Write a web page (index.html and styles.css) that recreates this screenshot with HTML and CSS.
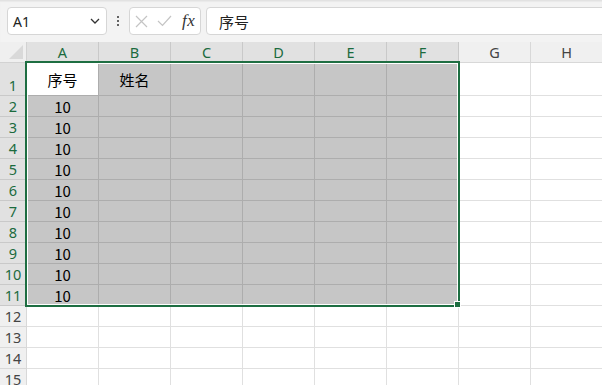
FILE: index.html
```html
<!DOCTYPE html>
<html lang="zh">
<head>
<meta charset="utf-8">
<title>Sheet</title>
<link rel="stylesheet" href="styles.css">
</head>
<body>
<div class="toolbar">
  <div class="namebox"><span class="ref">A1</span>
    <svg class="chev" width="10" height="6" viewBox="0 0 10 6"><path d="M1 1 L5 5 L9 1" fill="none" stroke="#333" stroke-width="1.3"/></svg>
  </div>
  <div class="dots"><span></span><span></span><span></span></div>
  <div class="fxbox">
    <svg class="ico" width="13" height="13" viewBox="0 0 13 13"><path d="M1 1 L12 12 M12 1 L1 12" stroke="#c4c4c4" stroke-width="1.2" fill="none"/></svg>
    <svg class="ico" width="15" height="12" viewBox="0 0 15 12"><path d="M1 6 L5.5 10.5 L14 1" stroke="#c4c4c4" stroke-width="1.2" fill="none"/></svg>
    <span class="fx">fx</span>
  </div>
  <div class="formula">序号</div>
</div>
<div class="sheet">
  <div class="grid">
    <div class="corner"><svg width="14" height="14" viewBox="0 0 14 14"><polygon points="14,0 14,14 0,14" fill="#d9d9d9"/></svg></div>
    <div class="ch on">A</div><div class="ch on">B</div><div class="ch on">C</div><div class="ch on">D</div><div class="ch on">E</div><div class="ch on">F</div><div class="ch">G</div><div class="ch">H</div>

    <div class="rh on">1</div><div class="c act">序号</div><div class="c sel">姓名</div><div class="c sel"></div><div class="c sel"></div><div class="c sel"></div><div class="c sel"></div><div class="c"></div><div class="c"></div>
    <div class="rh on">2</div><div class="c sel">10</div><div class="c sel"></div><div class="c sel"></div><div class="c sel"></div><div class="c sel"></div><div class="c sel"></div><div class="c"></div><div class="c"></div>
    <div class="rh on">3</div><div class="c sel">10</div><div class="c sel"></div><div class="c sel"></div><div class="c sel"></div><div class="c sel"></div><div class="c sel"></div><div class="c"></div><div class="c"></div>
    <div class="rh on">4</div><div class="c sel">10</div><div class="c sel"></div><div class="c sel"></div><div class="c sel"></div><div class="c sel"></div><div class="c sel"></div><div class="c"></div><div class="c"></div>
    <div class="rh on">5</div><div class="c sel">10</div><div class="c sel"></div><div class="c sel"></div><div class="c sel"></div><div class="c sel"></div><div class="c sel"></div><div class="c"></div><div class="c"></div>
    <div class="rh on">6</div><div class="c sel">10</div><div class="c sel"></div><div class="c sel"></div><div class="c sel"></div><div class="c sel"></div><div class="c sel"></div><div class="c"></div><div class="c"></div>
    <div class="rh on">7</div><div class="c sel">10</div><div class="c sel"></div><div class="c sel"></div><div class="c sel"></div><div class="c sel"></div><div class="c sel"></div><div class="c"></div><div class="c"></div>
    <div class="rh on">8</div><div class="c sel">10</div><div class="c sel"></div><div class="c sel"></div><div class="c sel"></div><div class="c sel"></div><div class="c sel"></div><div class="c"></div><div class="c"></div>
    <div class="rh on">9</div><div class="c sel">10</div><div class="c sel"></div><div class="c sel"></div><div class="c sel"></div><div class="c sel"></div><div class="c sel"></div><div class="c"></div><div class="c"></div>
    <div class="rh on">10</div><div class="c sel">10</div><div class="c sel"></div><div class="c sel"></div><div class="c sel"></div><div class="c sel"></div><div class="c sel"></div><div class="c"></div><div class="c"></div>
    <div class="rh on">11</div><div class="c sel">10</div><div class="c sel"></div><div class="c sel"></div><div class="c sel"></div><div class="c sel"></div><div class="c sel"></div><div class="c"></div><div class="c"></div>
    <div class="rh">12</div><div class="c"></div><div class="c"></div><div class="c"></div><div class="c"></div><div class="c"></div><div class="c"></div><div class="c"></div><div class="c"></div>
    <div class="rh">13</div><div class="c"></div><div class="c"></div><div class="c"></div><div class="c"></div><div class="c"></div><div class="c"></div><div class="c"></div><div class="c"></div>
    <div class="rh">14</div><div class="c"></div><div class="c"></div><div class="c"></div><div class="c"></div><div class="c"></div><div class="c"></div><div class="c"></div><div class="c"></div>
    <div class="rh">15</div><div class="c"></div><div class="c"></div><div class="c"></div><div class="c"></div><div class="c"></div><div class="c"></div><div class="c"></div><div class="c"></div>
  </div>
  <div class="selection"></div>
  <div class="handle"></div>
</div>
</body>
</html>
```
FILE: styles.css
```css
* { box-sizing: border-box; }
html, body { margin: 0; padding: 0; }
body {
  width: 602px;
  height: 385px;
  overflow: hidden;
  background: #fff;
  font-family: "Noto Sans", "Noto Sans CJK SC", sans-serif;
  color: #000;
}
.toolbar {
  height: 42px;
  background: #f3f3f3;
  border-top: 1px solid #e2e2e2;
  box-shadow: inset 0 1px 1px rgba(0,0,0,0.04);
  display: flex;
  align-items: flex-start;
  padding: 6px 0 0 7px;
  white-space: nowrap;
}
.namebox, .fxbox, .formula {
  height: 28px;
  background: #fff;
  border: 1px solid #d6d6d6;
  border-radius: 4px;
}
.namebox {
  width: 100px;
  display: flex;
  align-items: center;
  justify-content: space-between;
  padding: 0 6px 0 5px;
  font-size: 14px;
  color: #222;
}
.dots {
  width: 22px;
  height: 28px;
  display: flex;
  flex-direction: column;
  align-items: center;
  justify-content: center;
  gap: 2px;
}
.dots span {
  width: 2px;
  height: 2px;
  background: #333;
  border-radius: 1px;
}
.fxbox {
  width: 72px;
  display: flex;
  align-items: center;
  padding-left: 5px;
  gap: 9px;
}
.fx {
  font-family: "Liberation Serif", serif;
  font-style: italic;
  font-size: 17px;
  color: #333;
  margin-left: 1px;
  letter-spacing: 0.5px;
}
.formula {
  margin-left: 5px;
  flex: 1;
  margin-right: -10px;
  display: flex;
  align-items: center;
  padding-left: 12px;
  font-family: "Noto Sans CJK SC", sans-serif;
  font-size: 15px;
  color: #222;
}
.sheet {
  position: relative;
}
.grid {
  display: grid;
  grid-template-columns: 27px repeat(8, 72px);
  grid-template-rows: 21px 33px repeat(14, 21px);
  width: 603px;
}
.corner {
  background: #efefef;
  border-right: 1px solid #d2d2d2;
  border-bottom: 1px solid #d2d2d2;
  display: flex;
  align-items: flex-end;
  justify-content: flex-end;
  padding: 0 3px 3px 0;
}
.ch, .rh {
  background: #f0f0f0;
  color: #444;
  border-right: 1px solid #d8d8d8;
  border-bottom: 1px solid #d8d8d8;
  font-size: 14.5px;
  display: flex;
  justify-content: center;
}
.ch { align-items: center; }
.rh { align-items: flex-end; line-height: 16px; padding-bottom: 2px; }
.ch.on, .rh.on {
  background: #e1e1e1;
  color: #1b6b3e;
  border-color: #c9c9c9;
}
.c {
  border-right: 1px solid #e0e0e0;
  border-bottom: 1px solid #e0e0e0;
  display: flex;
  align-items: center;
  justify-content: center;
  font-family: "Noto Sans CJK SC", sans-serif;
  font-size: 15px;
  line-height: 18px;
  padding-top: 1px;
}
.c.sel {
  background: #c6c6c6;
  border-color: #adadad;
}
.c.act {
  background: #fff;
  border-color: #adadad;
}
.selection {
  position: absolute;
  left: 25px;
  top: 19px;
  width: 435px;
  height: 246px;
  border: 2px solid #1e6e42;
  box-shadow: inset 0 0 0 1px #fff;
  pointer-events: none;
}
.handle {
  position: absolute;
  left: 454px;
  top: 259px;
  width: 7px;
  height: 7px;
  background: #1e6e42;
  border: 1px solid #fff;
}
```
